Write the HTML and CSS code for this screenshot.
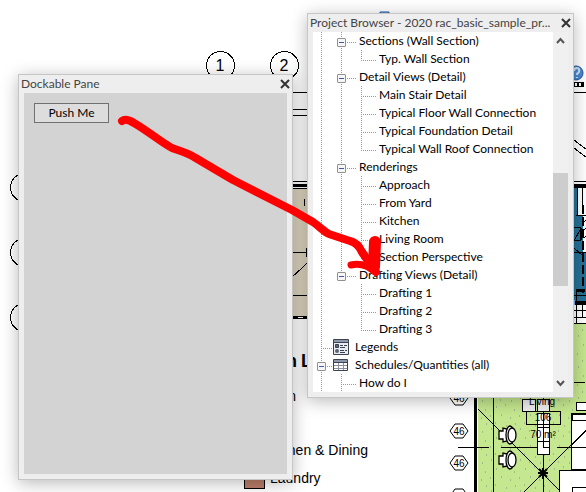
FILE: index.html
```html
<!DOCTYPE html>
<html lang="en">
<head>
<meta charset="utf-8">
<title>Dockable Pane</title>
<link rel="stylesheet" href="styles.css">
</head>
<body>
<main class="desktop">
  <svg class="plan" width="586" height="492" viewBox="0 0 586 492" aria-hidden="true">
    <defs>
      <pattern id="grass" width="29" height="31" patternUnits="userSpaceOnUse">
        <rect width="29" height="31" fill="#c5e78f"/>
        <path d="M3 4h1M12 2h1M21 7h1M8 12h1M17 15h1M26 13h1M2 20h1M13 23h1M22 21h1M7 28h1M18 29h1M27 26h1" stroke="#7f8f83"/>
      </pattern>
      <g id="hex"><path d="M-4-7h8l5 7-5 7h-8l-5-7z" fill="#fff" stroke="#000"/><text x="0" y="4" text-anchor="middle" font-size="10">46</text></g>
      <g id="chair" fill="#fff" stroke="#000" stroke-width="1.3">
        <path d="M-12-4h4v-3l8 2v10l-8 2v-3h-4z"/><ellipse cx="-1" cy="0" rx="4" ry="9"/><ellipse cx="1" cy="0" rx="4" ry="7"/>
      </g>
    </defs>
    <g fill="none" stroke="#000" shape-rendering="crispEdges">
      <circle cx="220.500" cy="65.500" r="14"/><circle cx="284.500" cy="65.500" r="14"/>
      <circle cx="24.500" cy="187.500" r="14"/><circle cx="24.500" cy="252.500" r="14"/><circle cx="24.500" cy="317.500" r="14"/>
      <path d="M292 92.500h294M292 109.500h20M292 115.500h20"/>
    </g>
    <g class="label" font-size="16"><text x="220" y="71" text-anchor="middle">1</text><text x="284" y="71" text-anchor="middle">2</text></g>

    <g shape-rendering="crispEdges">
      <rect x="290" y="189" width="20" height="127" fill="#dbd2bc"/>
      <path d="M290 181.500h20M290 188.500h20M290 252.500h17M306.500 248v9M290 279l20-18.500M290 295.500h20M304.500 199v7" stroke="#000" fill="none"/>
      <path d="M290 184h20v3h-20zM290 316h20v3h-20z"/>
      <path d="M298 317.500h5" stroke="#fff"/>
    </g>

    <circle cx="576" cy="73" r="7" fill="#4a88d0" stroke="#24569a"/>
    <path d="M574 71q0-3 3-3t2 4l-2 2v1M577 77v1" stroke="#cfe2f7" stroke-width="2" fill="none"/>
    <path d="M380 14v-2h9v2" fill="#86b4e3" stroke="#24569a"/>
    <g shape-rendering="crispEdges">
      <path d="M572 82h12v5h-12z"/><path d="M575 83h2v3h-2zM579 83h2v3h-2z" fill="#fff"/>
      <path d="M574 140l12 9M574 148l12 9M574 181.500h12" stroke="#000"/>
      <path d="M574 184h12v4h-12z"/>
      <path d="M574 188h12v113h-12z" fill="#267197"/>
      <path d="M577 188h9v27h-9zM583 215h3v38h-3z" fill="#fff"/>
      <path d="M577.500 188v27M582.500 188v26M576 215.500h10M574 227.500h6v13h-6M574 241l7-13M574 248l9 8M581.500 240v-12M584 222l2-2M584 230l2-2M584 238l2-2M574 252.500h12M574 295.500h12M576 301v-12" stroke="#000" fill="none"/>
      <path d="M583 205v88" stroke="#000" stroke-width="2" stroke-dasharray="9 3"/>
      <path d="M576 289h9v3h-9zM574 301h12v4h-12z"/>
      <path d="M574 300h1v5h-1z" fill="#7da8ef"/>
      <path d="M574 305h12v18h-12z" fill="#fff"/>
      <path d="M574 310.500h12M574 317.500h12M576.500 305v18M582.500 305v12M574 323.500h12" stroke="#000"/>
      <path d="M565 324h21v168H478v-97h87z" fill="url(#grass)"/>
      <path d="M474 395h3v97h-3z"/>
      <path d="M574 382.500h11M578 382h-4M493.500 395v97M458 447.500h31M501 447.500h36M557 447.500h29M543.500 395v97" stroke="#000"/>
      <path d="M478 409l83 83M586 430l-62 62" stroke="#000"/>
      <path d="M522.500 399.500h13v12h-13zM537.500 399.500h12v12h-12z" fill="#eee" stroke="#000"/>
      <path d="M537.500 413.500h12v41h-12zM576.500 402.500h10v8h-10z" fill="#fff" stroke="#000"/>
      <path d="M537 427.500h12M537 441.500h12M543.500 413v34h6" stroke="#000" fill="none"/>
      <path d="M526.500 411.500h34v13h-34z" fill="none" stroke="#000"/>
      <path d="M571.500 413.500h15v56h-15zM572.500 414.500h14v6h-14zM559.500 470.500h27v22h-27zM572.500 487.500h14v5h-14z" fill="#fff" stroke="#000"/>
      <path d="M571.500 445l15-15M571 447.500h15" stroke="#000"/>
    </g>
    <use href="#chair" x="511" y="435"/><use href="#chair" x="511" y="460"/>
    <path d="M543 468v11M538 473h10M539 469l8 8M547 469l-8 8" stroke="#000" stroke-width="2"/>
    <g class="label" font-size="10" text-anchor="middle">
      <text x="542" y="405">Living</text><text x="543" y="421">106</text><text x="543" y="438">70 m²</text>
      <use href="#hex" x="459" y="398"/><use href="#hex" x="459" y="431"/><use href="#hex" x="459" y="463"/><use href="#hex" x="459" y="496"/>
    </g>
    <rect x="244.500" y="462.500" width="20" height="26" fill="#b97e69" stroke="#000"/>
    <g class="legend">
      <text class="heading" x="297" y="367" text-anchor="end">n</text><text class="heading" x="301" y="367">L</text>
      <text x="296" y="401" text-anchor="end">n</text>
      <text x="368" y="455" text-anchor="end">Kitchen &amp; Dining</text>
      <text x="270" y="483">Laundry</text>
    </g>
  </svg>

  <section class="window pane" aria-labelledby="pane-title">
    <header class="titlebar"><h1 id="pane-title">Dockable Pane</h1>
      <button class="close" aria-label="Close"><svg width="10" height="10" viewBox="0 0 10 10"><path d="M1 1l8 8M9 1L1 9"/></svg></button></header>
    <div class="canvas"><button class="push">Push Me</button></div>
  </section>

  <section class="window browser" aria-labelledby="browser-title">
    <header class="titlebar"><h1 id="browser-title">Project Browser - 2020 rac_basic_sample_pr...</h1>
      <button class="close" aria-label="Close"><svg width="10" height="10" viewBox="0 0 10 10"><path d="M1 1l8 8M9 1L1 9"/></svg></button></header>
    <div class="view">
      <ul class="tree">
        <li><i class="g v"></i><i class="g v h"><button class="toggle" aria-label="Collapse"></button></i>Sections (Wall Section)</li>
        <li><i class="g v"></i><i class="g v"></i><i class="g l h"></i>Typ. Wall Section</li>
        <li><i class="g v"></i><i class="g v h"><button class="toggle" aria-label="Collapse"></button></i>Detail Views (Detail)</li>
        <li><i class="g v"></i><i class="g v"></i><i class="g v h"></i>Main Stair Detail</li>
        <li><i class="g v"></i><i class="g v"></i><i class="g v h"></i>Typical Floor Wall Connection</li>
        <li><i class="g v"></i><i class="g v"></i><i class="g v h"></i>Typical Foundation Detail</li>
        <li><i class="g v"></i><i class="g v"></i><i class="g l h"></i>Typical Wall Roof Connection</li>
        <li><i class="g v"></i><i class="g v h"><button class="toggle" aria-label="Collapse"></button></i>Renderings</li>
        <li><i class="g v"></i><i class="g v"></i><i class="g v h"></i>Approach</li>
        <li><i class="g v"></i><i class="g v"></i><i class="g v h"></i>From Yard</li>
        <li><i class="g v"></i><i class="g v"></i><i class="g v h"></i>Kitchen</li>
        <li><i class="g v"></i><i class="g v"></i><i class="g v h"></i>Living Room</li>
        <li><i class="g v"></i><i class="g v"></i><i class="g l h"></i>Section Perspective</li>
        <li><i class="g v"></i><i class="g l h"><button class="toggle" aria-label="Collapse"></button></i>Drafting Views (Detail)</li>
        <li><i class="g v"></i><i class="g"></i><i class="g v h"></i>Drafting 1</li>
        <li><i class="g v"></i><i class="g"></i><i class="g v h"></i>Drafting 2</li>
        <li><i class="g v"></i><i class="g"></i><i class="g l h"></i>Drafting 3</li>
        <li><i class="g v h short"></i><svg class="icon" width="16" height="16" viewBox="0 0 16 16"><path d="M.5.500h15v15H.5z" fill="#e8ebf0" stroke="#3b4350"/><path d="M1 1h14v2H1z" fill="#8d99ab"/><path d="M1 3h14v1H1z" fill="#3b4350"/><path d="M2.500 5.500h3v3h-3z" fill="#596474" stroke="#3b4350"/><circle cx="4" cy="12" r="2" fill="#596474"/><path d="M7 6.500h3M11 6.500h3M7 8.500h5M7 11.500h4M12 11.500h2M7 13.500h5" stroke="#3b4350"/></svg>Legends</li>
        <li><i class="g v h short"><button class="toggle" aria-label="Collapse"></button></i><svg class="icon" width="16" height="16" viewBox="0 0 16 16"><path d="M.5 2.500h14v11H.5z" fill="#fff" stroke="#3b4350"/><path d="M1 3h13v2H1z" fill="#8d99ab"/><path d="M1 5.500h13" stroke="#3b4350"/><path d="M1 8.500h13M1 11.500h13M5.500 6v7M10.500 6v7" stroke="#8b929d"/></svg>Schedules/Quantities (all)</li>
        <li><i class="g v"></i><i class="g v h"></i>How do I</li>
      </ul>
      <div class="scrollbar">
        <button class="step" aria-label="Scroll up"><svg width="9" height="7" viewBox="0 0 9 7"><path d="M1 6l3.500-4L8 6"/></svg></button>
        <div class="track"><div class="thumb"></div></div>
        <button class="step" aria-label="Scroll down"><svg width="9" height="7" viewBox="0 0 9 7"><path d="M1 1l3.500 4L8 1"/></svg></button>
      </div>
    </div>
  </section>

  <svg class="arrow" width="586" height="492" viewBox="0 0 586 492" aria-hidden="true">
    <g fill="none" stroke="#f00" stroke-linecap="round" stroke-linejoin="round">
      <path d="M122 121Q126 118 134 123C148 131 162 143 172 148C180 151 188 153 194 157L233 180L292 210L313 222C319 226 323 231 329 234L350 241Q358 243 362 252L370 264" stroke-width="8"/>
      <path d="M351 265Q364 262 376 272" stroke-width="7"/>
      <path d="M375 242L374 267" stroke-width="12"/>
      <path d="M362 252L376 272L368 266L374 254" stroke-width="8"/>
    </g>
  </svg>
</main>
</body>
</html>
```
FILE: styles.css
```css
* { box-sizing: border-box; }

body {
  margin: 0;
  background: #fff;
  font: 12px/18px Lato, "Open Sans", sans-serif;
  color: #000;
}

.desktop {
  position: relative;
  min-height: 100vh;
  overflow: hidden;
}

.plan, .arrow {
  position: absolute;
  top: 0;
  left: 0;
}

.arrow { pointer-events: none; }

.label { font-family: "Liberation Sans", sans-serif; }

.legend { font: 14px "Liberation Sans", sans-serif; }
.heading { font-size: 18px; font-weight: bold; }

.window {
  position: absolute;
  display: flex;
  flex-direction: column;
  padding: 0 5px 5px;
  background: #eee;
  border: 1px solid #c6c6c6;
  box-shadow: 0 3px 16px rgba(0, 0, 0, 0.28);
}

.pane { left: 18px; top: 74px; width: 275px; height: 406px; }
.browser { left: 307px; top: 13px; width: 267px; }

.titlebar {
  display: flex;
  align-items: center;
  justify-content: space-between;
  height: 18px;
  margin: 0 -3px;
}

.titlebar h1 {
  margin: 0;
  font-size: 12px;
  font-weight: normal;
  color: #444;
  white-space: nowrap;
}

button {
  padding: 0;
  border: 0;
  background: none;
  font: inherit;
  color: inherit;
}

.close { display: flex; }
.close svg { fill: none; stroke: #333; stroke-width: 2; }

.canvas {
  flex: 1;
  padding: 10px;
  background: #d3d3d3;
}

.push {
  display: block;
  width: 75px;
  height: 20px;
  border: 1px solid #707070;
  background: #ddd;
}

.view {
  display: flex;
  background: #fff;
}

.tree {
  flex: 1;
  margin: 0;
  padding: 0 0 0 8px;
  list-style: none;
}

.tree li {
  display: flex;
  height: 18px;
  white-space: nowrap;
}

.g {
  position: relative;
  flex: none;
  width: 20px;
}

.g.h { width: 18px; }
.g.short { width: 12px; }

.v::before, .l::before {
  content: "";
  position: absolute;
  top: 0;
  left: 0;
  width: 1px;
  height: 18px;
  background: repeating-linear-gradient(#999 0 1px, transparent 1px 2px);
}

.l::before { height: 10px; }

.h::after {
  content: "";
  position: absolute;
  top: 10px;
  left: 0;
  right: 3px;
  height: 1px;
  background: repeating-linear-gradient(90deg, #999 0 1px, transparent 1px 2px);
}

.short::after { right: 1px; }

.toggle {
  position: absolute;
  z-index: 1;
  top: 6px;
  left: -4px;
  width: 9px;
  height: 9px;
  border: 1px solid #919191;
  border-radius: 1px;
  background: linear-gradient(#3d5ba9, #3d5ba9) center / 5px 1px no-repeat, #f6f6f6;
}

.icon { margin: 1px 6px 0 0; }

.scrollbar {
  display: flex;
  flex-direction: column;
  width: 15px;
  background: #f0f0f0;
}

.step {
  display: grid;
  place-items: center;
  height: 17px;
}

.step svg { fill: none; stroke: #555; stroke-width: 2; }

.track {
  display: flex;
  flex: 1;
  flex-direction: column;
  justify-content: flex-end;
  padding-bottom: 89px;
}

.thumb { height: 113px; background: #cdcdcd; }
```
